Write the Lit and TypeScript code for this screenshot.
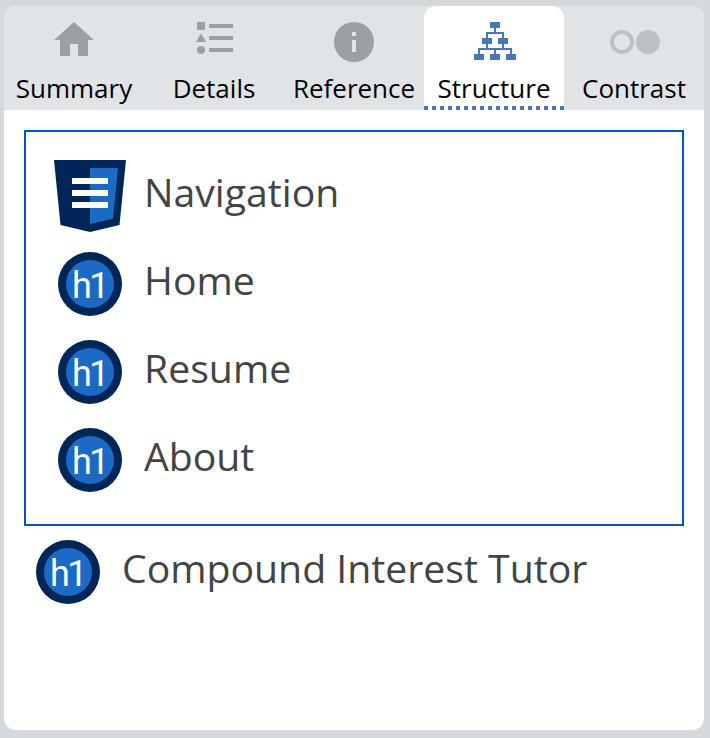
import { LitElement, html, css, svg } from "lit";
import { customElement, property } from "lit/decorators.js";

const tabIcons: Record<string, unknown> = {
  Summary: svg`<path fill="#9ba0a2" d="M40 2 60 20H54V36H44V24H36V36H26V20H20.2Z"/>`,
  Details: svg`<g fill="#9ba0a2"><path d="M23 2h8v8h-8zM27 13.3l5 8.7h-10zM35 4h24v4H35zM35 16h24v4H35zM35 28h24v4H35z"/><circle cx="27" cy="30" r="4"/></g>`,
  Reference: svg`<circle cx="40" cy="22" r="20" fill="#9ba0a2"/><path fill="#e0e4e6" d="M38 12h4v4h-4zM38 20h4v12h-4z"/>`,
  Structure: svg`<path fill="#4777b4" d="M36 2h10v6H36zM40 8h2v4h-2zM32 12h18v2H32zM32 14h2v4h-2zM48 14h2v4h-2zM28 18h10v6H28zM44 18h10v6H44zM32 24h2v4h-2zM48 24h2v4h-2zM24 28h34v2H24zM24 30h2v4h-2zM40 30h2v4h-2zM56 30h2v4h-2zM20 34h10v6H20zM36 34h10v6H36zM52 34h10v6H52z"/>`,
  Contrast: svg`<circle cx="28" cy="22" r="10" fill="none" stroke="#bdc1c3" stroke-width="4"/><circle cx="54" cy="22" r="12" fill="#bdc1c3"/>`,
};

@customElement("structure-row")
export class StructureRow extends LitElement {
  @property() kind = "h1";
  @property() label = "";

  static styles = css`
    :host { display: flex; align-items: center; height: 88px; color: #444; }
    svg { display: block; flex: none; width: 72px; height: 72px; }
    .label { margin-left: 18px; font: 39.2px/56px "Open Sans", sans-serif; white-space: nowrap; padding-bottom: 8px; }
    .tag { font: 36px Roboto, sans-serif; fill: #fff; }
  `;

  render() {
    const icon = this.kind === "nav"
      ? svg`<path fill="#002557" d="M0 0H72L65.5 65 36 72 6.5 65Z"/><path fill="#1b6ac6" d="M36 8H64L59 58.7 36 64Z"/><path fill="#fff" d="M18 18h36v6H18zM18 30h36v6H18zM18 42h36v6H18z"/>`
      : svg`<circle cx="36" cy="36" r="32" fill="#002557"/><circle cx="36" cy="36" r="24" fill="#1b6ac6"/><text class="tag" x="18" y="50" textLength="37.5" lengthAdjust="spacing">h1</text>`;
    return html`<svg viewBox="0 0 72 72">${icon}</svg><span class="label">${this.label}</span>`;
  }
}

@customElement("app-root")
export class AppRoot extends LitElement {
  static styles = css`
    :host { display: block; box-sizing: border-box; height: 738px; padding: 6px 6px 8px 4px; background: #d4d9dd; }
    .panel { height: 724px; border-radius: 12px; overflow: hidden; background: #fff; }
    .tabs { display: grid; grid-template-columns: repeat(5, 140px); height: 104px; background: #e0e4e6; }
    .tab { display: flex; flex-direction: column; align-items: center; box-sizing: border-box; padding-top: 14px; }
    .tab svg { display: block; width: 80px; height: 44px; flex: none; }
    .tab span { font: 26px/36px "Open Sans", sans-serif; color: #000; margin-top: 6px; }
    .active {
      border-radius: 12px 12px 0 0;
      background: repeating-linear-gradient(to right, #4777b4 0 4px, #fff 4px 8px) bottom left / 100% 4px no-repeat, #fff;
    }
    .group { box-sizing: border-box; width: 660px; height: 396px; margin: 20px 20px 0; border: 2px solid #0052c2; padding: 20px 28px; }
    .after { display: block; padding: 2px 28px; }
  `;

  render() {
    return html`<div class="panel">
      <nav class="tabs">
        ${Object.keys(tabIcons).map((name) => html`<div class="tab ${name === "Structure" ? "active" : ""}">
          <svg viewBox="0 0 80 44">${tabIcons[name]}</svg><span>${name}</span>
        </div>`)}
      </nav>
      <div class="group">
        <structure-row kind="nav" label="Navigation"></structure-row>
        ${["Home", "Resume", "About"].map((l) => html`<structure-row label=${l}></structure-row>`)}
      </div>
      <div class="after"><structure-row label="Compound Interest Tutor"></structure-row></div>
    </div>`;
  }
}
